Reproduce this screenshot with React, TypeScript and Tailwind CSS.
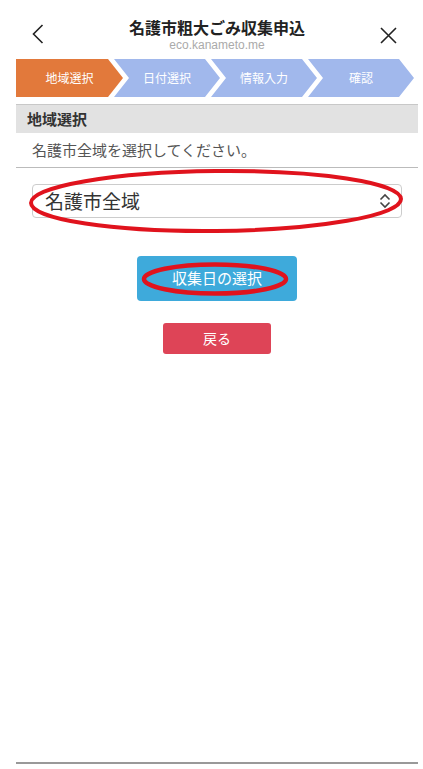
import React from 'react';

const steps = ['地域選択', '日付選択', '情報入力', '確認'];

const App = () => {
  return (
    <div className="h-[769px] w-[423px] bg-white flex flex-col pl-[16px] pr-[5px] font-['Noto_Sans_CJK_JP','Noto_Sans',sans-serif] overflow-hidden">
      {/* Header */}
      <div className="h-[59px] flex items-start relative">
        <div className="w-[40px] pt-[24px] pl-[16px]">
          <svg width="12" height="20" viewBox="0 0 12 20" fill="none" stroke="#222" strokeWidth="1.6">
            <path d="M10.5 1 L1.5 10 L10.5 19" />
          </svg>
        </div>
        <div className="flex-1 flex flex-col items-center pt-[16px]">
          <div className="text-[16px] leading-[22px] font-bold text-[#222]">名護市粗大ごみ収集申込</div>
          <div className="text-[12px] leading-[16px] text-[#aaa] font-['Liberation_Sans',sans-serif] mt-[-1px]">eco.kanameto.me</div>
        </div>
        <div className="w-[40px] pt-[27px] pl-[2px]">
          <svg width="17" height="17" viewBox="0 0 17 17" fill="none" stroke="#222" strokeWidth="1.6">
            <path d="M1 1 L16 16 M16 1 L1 16" />
          </svg>
        </div>
      </div>

      {/* Steps */}
      <div className="flex h-[38px]">
        {steps.map((s, i) => (
          <div
            key={s}
            className={
              i === 0
                ? 'w-[107px] shrink-0 flex items-center justify-center text-white text-[12px] bg-[#e2793b] [clip-path:polygon(0_0,92px_0,107px_50%,92px_100%,0_100%)]'
                : 'w-[106px] shrink-0 -ml-[9px] flex items-center justify-center text-white text-[12px] bg-[#a1b8ec] [clip-path:polygon(0_0,91px_0,106px_50%,91px_100%,0_100%,15px_50%)]'
            }
          >
            {s}
          </div>
        ))}
      </div>

      {/* Section */}
      <div className="mt-[7px] border-t border-[#c8c8c8] bg-[#e2e2e2] h-[29px] flex items-center pl-[11px] text-[15px] font-bold text-[#333]">
        地域選択
      </div>
      <div className="h-[35px] flex items-center pl-[16px] text-[15px] text-[#555] border-b border-[#bbb]">
        名護市全域を選択してください。
      </div>

      {/* Select */}
      <div className="mt-[16px] mx-[16px] relative">
        <div className="h-[34px] border border-[#ccc] rounded-[4px] flex items-center justify-between pl-[12px] pr-[9px]">
          <span className="text-[19px] text-[#333]">名護市全域</span>
          <svg width="14" height="16" viewBox="0 0 14 16" fill="none" stroke="#444" strokeWidth="1.6">
            <path d="M2.5 6.5 L7 2 L11.5 6.5" />
            <path d="M2.5 9.5 L7 14 L11.5 9.5" />
          </svg>
        </div>
        <svg className="absolute left-[-4px] top-[-15px] overflow-visible pointer-events-none" width="376" height="65" viewBox="0 0 376 65" fill="none">
          <ellipse cx="188" cy="32" rx="185" ry="30" stroke="#e0131d" strokeWidth="4" transform="rotate(-0.6 188 32)" />
        </svg>
      </div>

      {/* Buttons */}
      <div className="flex flex-col items-center">
        <div className="mt-[38px] relative w-[160px] h-[45px] rounded-[4px] bg-[#3eaadb] flex items-center justify-center text-white text-[15px]">
          収集日の選択
          <svg className="absolute left-[5px] top-[7px] overflow-visible pointer-events-none" width="146" height="32" viewBox="0 0 146 32" fill="none">
            <ellipse cx="73" cy="16" rx="71" ry="14.5" stroke="#e0131d" strokeWidth="4.5" />
          </svg>
        </div>
        <div className="mt-[22px] w-[108px] h-[31px] rounded-[3px] bg-[#de4457] flex items-center justify-center text-white text-[14px]">
          戻る
        </div>
      </div>

      <div className="mt-auto mb-[5px] h-[2px] bg-[#999]" />
    </div>
  );
};

export default App;
